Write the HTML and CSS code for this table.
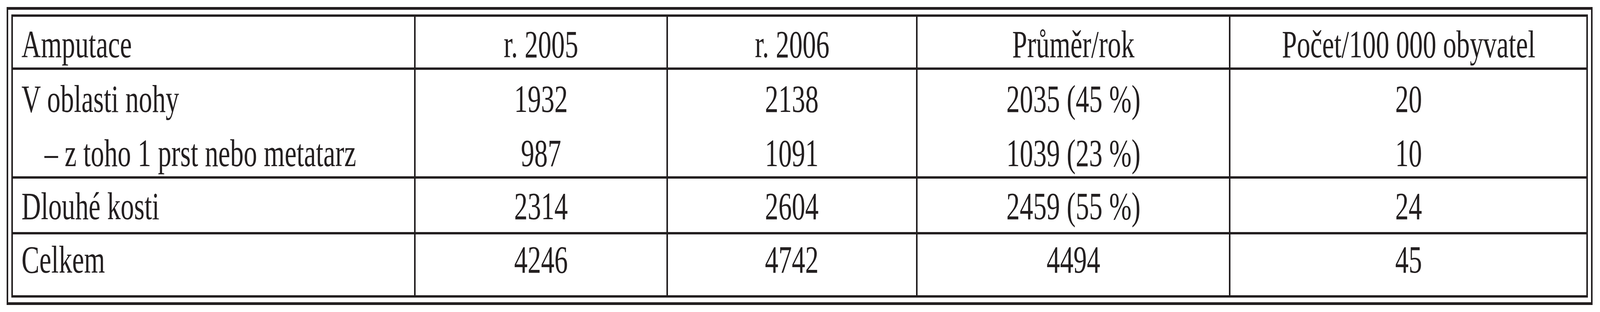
FILE: index.html
```html
<!DOCTYPE html>
<html lang="cs">
<head>
<meta charset="utf-8">
<title>Amputace</title>
<link rel="stylesheet" href="styles.css">
</head>
<body>
<div class="frame">
  <div class="table">
    <div class="row head">
      <div class="cell label"><span class="txt">Amputace</span></div>
      <div class="cell"><span class="txt">r. 2005</span></div>
      <div class="cell"><span class="txt">r. 2006</span></div>
      <div class="cell"><span class="txt">Průměr/rok</span></div>
      <div class="cell"><span class="txt">Počet/100 000 obyvatel</span></div>
    </div>
    <div class="row r1">
      <div class="cell label"><span class="txt">V oblasti nohy</span></div>
      <div class="cell"><span class="txt">1932</span></div>
      <div class="cell"><span class="txt">2138</span></div>
      <div class="cell"><span class="txt">2035 (45 %)</span></div>
      <div class="cell"><span class="txt">20</span></div>
    </div>
    <div class="row r2">
      <div class="cell label sub"><span class="txt">– z toho 1 prst nebo metatarz</span></div>
      <div class="cell"><span class="txt">987</span></div>
      <div class="cell"><span class="txt">1091</span></div>
      <div class="cell"><span class="txt">1039 (23 %)</span></div>
      <div class="cell"><span class="txt">10</span></div>
    </div>
    <div class="row r3">
      <div class="cell label"><span class="txt">Dlouhé kosti</span></div>
      <div class="cell"><span class="txt">2314</span></div>
      <div class="cell"><span class="txt">2604</span></div>
      <div class="cell"><span class="txt">2459 (55 %)</span></div>
      <div class="cell"><span class="txt">24</span></div>
    </div>
    <div class="row r4">
      <div class="cell label"><span class="txt">Celkem</span></div>
      <div class="cell"><span class="txt">4246</span></div>
      <div class="cell"><span class="txt">4742</span></div>
      <div class="cell"><span class="txt">4494</span></div>
      <div class="cell"><span class="txt">45</span></div>
    </div>
  </div>
</div>
<script src="script.js"></script>
</body>
</html>
```
FILE: styles.css
```css
:root {
  /* one design pixel of the 5960px-wide layout, horizontally */
  --u: calc(100vw / 5960);
  --sx: 1;
}
@media (max-width: 4200px) {
  :root { --sx: 0.687248; }
}
html {
  overflow: hidden;
}
html, body {
  margin: 0;
  background: #ffffff;
}
body {
  padding: 18px 0 0 calc(25 * var(--u));
  font-family: "Liberation Serif", "Times New Roman", serif;
  font-size: 100px;
  color: #231f20;
}
.frame {
  width: fit-content;
  border-style: solid;
  border-color: #231f20;
  border-width: 7px calc(7 * var(--u));
  padding: 12px calc(11 * var(--u));
}
.table {
  display: flex;
  flex-direction: column;
  border-style: solid;
  border-color: #231f20;
  border-width: 6px calc(6 * var(--u));
}
.row {
  display: grid;
  grid-template-columns:
    calc(1501 * var(--u))
    calc(939 * var(--u))
    calc(931 * var(--u))
    calc(1165 * var(--u))
    calc(1326 * var(--u));
  box-sizing: border-box;
}
.head { height: 136px; border-bottom: 6px solid #231f20; }
.r1 { height: 139px; }
.r2 { height: 140px; border-bottom: 6px solid #231f20; }
.r3 { height: 143px; border-bottom: 6px solid #231f20; }
.r4 { height: 156px; }
.cell {
  display: flex;
  justify-content: center;
  align-items: flex-start;
  min-width: 0;
  border-right: calc(6 * var(--u)) solid #231f20;
}
.cell:last-child { border-right: 0; }
.txt {
  display: block;
  flex: none;
  line-height: 100px;
  white-space: nowrap;
  transform: scaleX(var(--sx));
  transform-origin: 50% 0;
}
.head .cell { padding-top: 21px; }
.r1 .cell { padding-top: 25px; }
.r2 .cell { padding-top: 25px; }
.r3 .cell { padding-top: 21px; }
.r4 .cell { padding-top: 15px; }
.label {
  justify-content: flex-start;
  padding-left: calc(33 * var(--u));
}
.label .txt { transform-origin: 0 0; }
.label.sub { padding-left: calc(118 * var(--u)); }
```
FILE: script.js
```js
(function () {
  var sx = Math.min(1, window.innerWidth / 5960);
  document.documentElement.style.setProperty('--sx', String(sx));
})();
```
